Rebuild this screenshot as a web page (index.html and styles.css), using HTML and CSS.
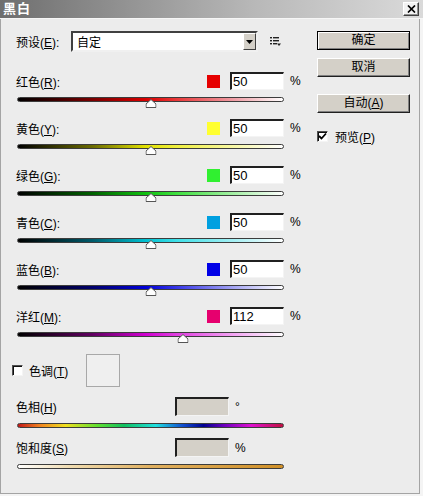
FILE: index.html
```html
<!DOCTYPE html>
<html>
<head>
<meta charset="utf-8">
<link rel="stylesheet" href="styles.css">
</head>
<body>
<div class="window">
  <div class="titlebar">
    <span class="title">黑白</span>
    <span class="close"><svg width="9" height="8" viewBox="0 0 9 8"><path d="M1 0.5L8 7.5M8 0.5L1 7.5" stroke="#000" stroke-width="1.7"/></svg></span>
  </div>
  <div class="content">
    <div class="left">
      <div class="preset">
        <span class="preset-label">预设(<u>E</u>):</span>
        <div class="select">
          <span class="select-text">自定</span>
          <span class="select-btn"><svg width="7" height="4" viewBox="0 0 7 4"><path d="M0 0H7L3.5 4Z" fill="#000"/></svg></span>
        </div>
        <svg class="menu-icon" width="11" height="9" viewBox="0 0 11 9">
          <rect x="0" y="0" width="2" height="1.4" fill="#222"/><rect x="3" y="0" width="6" height="1.4" fill="#222"/>
          <rect x="0" y="3" width="2" height="1.4" fill="#222"/><rect x="3" y="3" width="6" height="1.4" fill="#222"/>
          <rect x="0" y="6" width="2" height="1.4" fill="#222"/><rect x="3" y="6" width="4" height="1.4" fill="#222"/>
          <path d="M7 6.5H11L9 9Z" fill="#222"/>
        </svg>
      </div>

      <div class="group">
        <div class="head">
          <span class="label">红色(<u>R</u>):</span>
          <span class="swatch sw-red"></span>
          <span class="field">50</span>
          <span class="unit">%</span>
        </div>
        <div class="track t-red"><svg class="thumb" style="left:50%" width="11" height="9" viewBox="0 0 11 9"><path d="M5.5 0.5L10.5 5V8.5H0.5V5Z" fill="#fff" stroke="#555"/></svg></div>
      </div>

      <div class="group">
        <div class="head">
          <span class="label">黄色(<u>Y</u>):</span>
          <span class="swatch sw-yellow"></span>
          <span class="field">50</span>
          <span class="unit">%</span>
        </div>
        <div class="track t-yellow"><svg class="thumb" style="left:50%" width="11" height="9" viewBox="0 0 11 9"><path d="M5.5 0.5L10.5 5V8.5H0.5V5Z" fill="#fff" stroke="#555"/></svg></div>
      </div>

      <div class="group">
        <div class="head">
          <span class="label">绿色(<u>G</u>):</span>
          <span class="swatch sw-green"></span>
          <span class="field">50</span>
          <span class="unit">%</span>
        </div>
        <div class="track t-green"><svg class="thumb" style="left:50%" width="11" height="9" viewBox="0 0 11 9"><path d="M5.5 0.5L10.5 5V8.5H0.5V5Z" fill="#fff" stroke="#555"/></svg></div>
      </div>

      <div class="group">
        <div class="head">
          <span class="label">青色(<u>C</u>):</span>
          <span class="swatch sw-cyan"></span>
          <span class="field">50</span>
          <span class="unit">%</span>
        </div>
        <div class="track t-cyan"><svg class="thumb" style="left:50%" width="11" height="9" viewBox="0 0 11 9"><path d="M5.5 0.5L10.5 5V8.5H0.5V5Z" fill="#fff" stroke="#555"/></svg></div>
      </div>

      <div class="group">
        <div class="head">
          <span class="label">蓝色(<u>B</u>):</span>
          <span class="swatch sw-blue"></span>
          <span class="field">50</span>
          <span class="unit">%</span>
        </div>
        <div class="track t-blue"><svg class="thumb" style="left:50%" width="11" height="9" viewBox="0 0 11 9"><path d="M5.5 0.5L10.5 5V8.5H0.5V5Z" fill="#fff" stroke="#555"/></svg></div>
      </div>

      <div class="group">
        <div class="head">
          <span class="label">洋红(<u>M</u>):</span>
          <span class="swatch sw-magenta"></span>
          <span class="field">112</span>
          <span class="unit">%</span>
        </div>
        <div class="track t-magenta"><svg class="thumb" style="left:62.4%" width="11" height="9" viewBox="0 0 11 9"><path d="M5.5 0.5L10.5 5V8.5H0.5V5Z" fill="#fff" stroke="#555"/></svg></div>
      </div>

      <div class="tint-row">
        <span class="checkbox"></span>
        <span class="tint-label">色调(<u>T</u>)</span>
        <span class="tint-box"></span>
      </div>

      <div class="group small">
        <div class="head">
          <span class="label fixed">色相(<u>H</u>)</span>
          <span class="field disabled"></span>
          <span class="unit">°</span>
        </div>
        <div class="track t-hue"></div>
      </div>

      <div class="group small">
        <div class="head">
          <span class="label fixed">饱和度(<u>S</u>)</span>
          <span class="field disabled"></span>
          <span class="unit">%</span>
        </div>
        <div class="track t-sat"></div>
      </div>
    </div>

    <div class="right">
      <button class="btn default">确定</button>
      <button class="btn cancel">取消</button>
      <button class="btn auto">自动(<u>A</u>)</button>
      <div class="check-row">
        <span class="checkbox"><svg width="9" height="9" viewBox="0 0 9 9"><path d="M1 4L3.5 6.5L8 1.5" stroke="#000" stroke-width="1.8" fill="none"/></svg></span>
        <span class="check-label">预览(<u>P</u>)</span>
      </div>
    </div>
  </div>
</div>
</body>
</html>
```

FILE: styles.css
```css
* { box-sizing: border-box; }
html, body { margin: 0; padding: 0; }
body {
  width: 423px;
  height: 496px;
  overflow: hidden;
  background: #f4f4f4;
  font-family: "Liberation Sans", "Noto Sans CJK SC", sans-serif;
  font-size: 12px;
  color: #000;
}
u { text-decoration: underline; text-underline-offset: 1px; }

.window {
  width: 423px;
  height: 496px;
  display: flex;
  flex-direction: column;
  padding: 0 3px 2px 0;
  background: #f4f4f4;
}

.titlebar {
  height: 19px;
  margin-right: -3px;
  display: flex;
  align-items: center;
  justify-content: space-between;
  padding: 0 4px 1px 3px;
  background: linear-gradient(to right, #6e6e6e, #b8b8b8 60%, #dadada);
  border-bottom: 1px solid #f6f6f6;
}
.title {
  color: #fff;
  font-weight: bold;
  font-size: 13px;
  line-height: 16px;
  letter-spacing: 1px;
}
.close {
  width: 16px;
  height: 14px;
  display: flex;
  align-items: center;
  justify-content: center;
  background: #f2f2f2;
  border: 1px solid;
  border-color: #fff #404040 #404040 #fff;
  box-shadow: inset -1px -1px 0 #909090;
}

.content {
  flex: 1;
  display: flex;
  align-items: flex-start;
  padding: 12px 0 0 15px;
  background: #ececec;
  border-left: 1px solid #a4a4a4;
  border-right: 1px solid #a4a4a4;
  border-bottom: 1px solid #a4a4a4;
}

.left { width: 290px; display: flex; flex-direction: column; }
.right { width: 93px; margin-left: 11px; display: flex; flex-direction: column; }

/* preset row */
.preset { height: 21px; display: flex; align-items: center; margin-bottom: 20px; }
.preset-label { width: 55px; }
.select {
  width: 187px;
  height: 21px;
  display: flex;
  align-items: center;
  background: #fff;
  border: 2px solid;
  border-color: #404040 #f0f0f0 #f0f0f0 #404040;
}
.select-text { flex: 1; padding-left: 4px; }
.select-btn {
  width: 13px;
  height: 17px;
  display: flex;
  align-items: center;
  justify-content: center;
  background: #d4d0c8;
  border: 1px solid;
  border-color: #fff #404040 #404040 #fff;
}
.menu-icon { margin-left: 12px; }

/* slider groups */
.group { display: flex; flex-direction: column; margin-bottom: 17px; }
.head { height: 18px; display: flex; align-items: center; }
.label { flex: 1; }
.swatch { width: 13px; height: 13px; margin-right: 10px; }
.sw-red { background: #e60000; }
.sw-yellow { background: #ffff30; }
.sw-green { background: #30f030; }
.sw-cyan { background: #00a0e0; }
.sw-blue { background: #0000e6; }
.sw-magenta { background: #e6006e; }

.field {
  width: 54px;
  height: 18px;
  padding-left: 1px;
  font-size: 13px;
  line-height: 15px;
  background: #fff;
  border-style: solid;
  border-width: 2px 1px 1px 2px;
  border-color: #202020 #f4f4f4 #f4f4f4 #202020;
}
.unit { width: 16px; margin-left: 6px; font-size: 12px; }

.track {
  position: relative;
  width: 267px;
  height: 5px;
  margin: 7px 0 0 1px;
  border: 1px solid #3c3c3c;
  border-radius: 3px;
}
.thumb { position: absolute; top: 1px; transform: translateX(-50%); }

.t-red { background: linear-gradient(to right, #000 0%, #7a0000 28%, #d80000 48%, #e83030 58%, #f0a0a8 82%, #fff 100%); }
.t-yellow { background: linear-gradient(to right, #000 0%, #6a6a00 28%, #e0e000 48%, #f0f040 60%, #f8f8a8 82%, #fff 100%); }
.t-green { background: linear-gradient(to right, #000 0%, #006000 28%, #10c010 48%, #40e040 60%, #a8f0a8 82%, #fff 100%); }
.t-cyan { background: linear-gradient(to right, #000 0%, #005a6a 28%, #00c0d0 48%, #40e0e8 60%, #a8f0f4 82%, #fff 100%); }
.t-blue { background: linear-gradient(to right, #000 0%, #00006a 28%, #0000d8 48%, #3838e8 60%, #a8a8f4 82%, #fff 100%); }
.t-magenta { background: linear-gradient(to right, #000 0%, #600060 28%, #d000d0 48%, #e040e0 60%, #f4a8f4 82%, #fff 100%); }
.t-hue { background: linear-gradient(to right, #c01818 0%, #f08020 8%, #f0e020 18%, #60e030 30%, #10c060 40%, #20e0e0 52%, #1050d0 62%, #000090 70%, #7000c0 78%, #e010d0 88%, #c01040 100%); }
.t-sat { background: linear-gradient(to right, #ffffff 0%, #f0dcb0 20%, #e0b060 50%, #d09028 100%); }

/* tint */
.tint-row { height: 33px; display: flex; align-items: center; }
.checkbox {
  width: 11px;
  height: 11px;
  display: flex;
  align-items: center;
  justify-content: center;
  background: #fff;
  border: 1px solid;
  border-color: #505050 #f4f4f4 #f4f4f4 #505050;
  box-shadow: inset 1px 1px 0 #101010;
}
.tint-row .checkbox { margin-left: -4px; }
.tint-label { width: 57px; margin-left: 6px; }
.tint-box {
  width: 34px;
  height: 33px;
  border: 1px solid #a8a8a8;
  background: #efefef;
}

.group.small { margin-top: 10px; margin-bottom: 0; }
.group.small .head { height: 19px; }
.label.fixed { flex: none; width: 159px; }
.field.disabled { height: 19px; background: #d4d0c8; }

/* buttons */
.btn {
  width: 93px;
  height: 19px;
  padding: 0;
  font-family: "Liberation Sans", "Noto Sans CJK SC", sans-serif;
  font-size: 12px;
  line-height: 15px;
  color: #000;
  background: #d4d0c8;
  border: 1px solid;
  border-color: #fff #202020 #202020 #fff;
  box-shadow: inset -1px -1px 0 #808080;
}
.btn.default {
  border-color: #000;
  box-shadow: inset 1px 1px 0 #fff, inset -1px -1px 0 #808080;
}
.btn.cancel { margin-top: 8px; }
.btn.auto { margin-top: 17px; }
.check-row { height: 12px; margin-top: 17px; display: flex; align-items: center; }
.check-label { margin-left: 7px; }
```
